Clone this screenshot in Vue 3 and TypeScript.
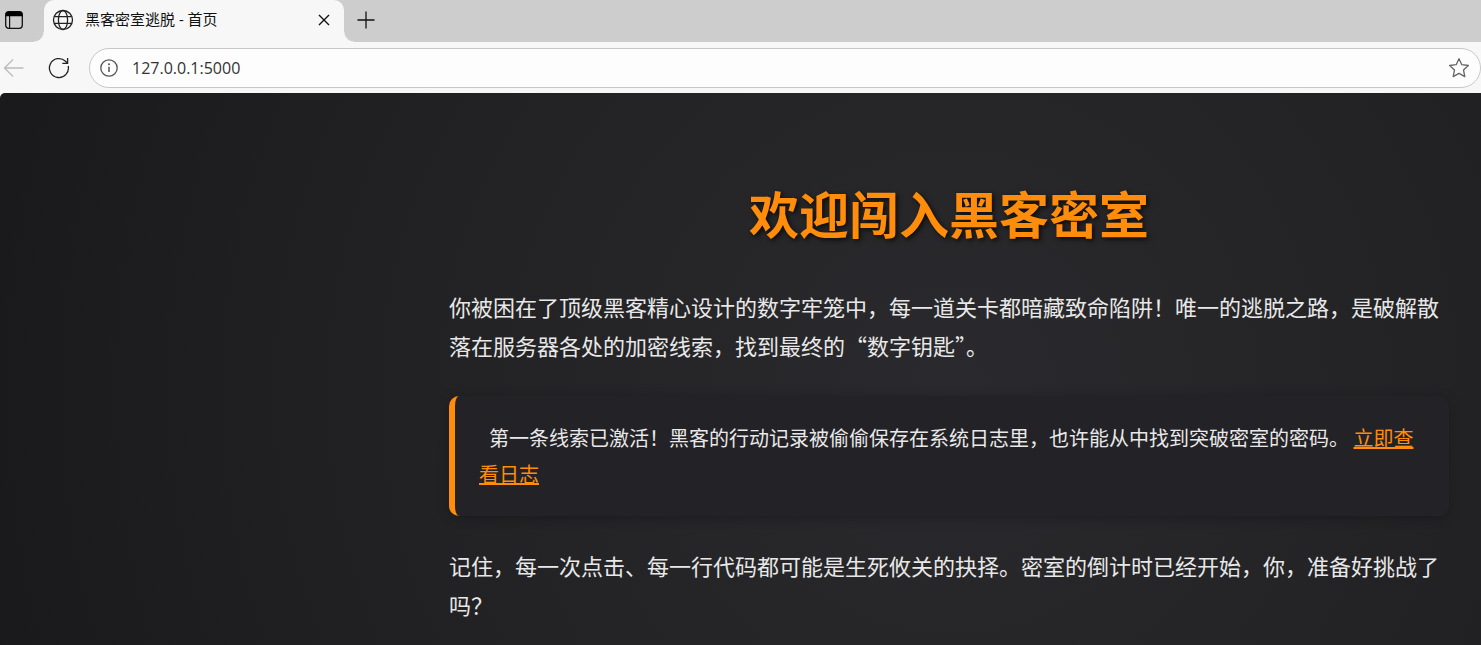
<script setup lang="ts">
import { ref } from 'vue'

const tabTitle = '黑客密室逃脱 - 首页'
const address = ref('127.0.0.1:5000')
</script>

<template>
  <div class="browser" lang="zh-CN">
    <header class="tab-strip">
      <button class="icon-button tab-menu" type="button" aria-label="标签页操作菜单">
        <svg width="20" height="20" viewBox="0 0 20 20" fill="none" stroke="#111">
          <rect x="1.7" y="1.7" width="16.6" height="16.6" rx="3" stroke-width="1.3" />
          <path d="M1.5 6.2V4.5a3 3 0 0 1 3-3h11a3 3 0 0 1 3 3v1.7z" fill="#000" stroke="none" />
          <path d="M5.6 6v12" stroke-width="1.2" />
        </svg>
      </button>
      <div class="tab">
        <svg class="globe" width="22" height="22" viewBox="0 0 22 22" fill="none" stroke="#222" stroke-width="1.3">
          <circle cx="11" cy="11" r="9.5" />
          <ellipse cx="11" cy="11" rx="4.6" ry="9.5" />
          <path d="M2.3 7.6h17.4M2.3 14.4h17.4" />
        </svg>
        <span class="tab-title">{{ tabTitle }}</span>
        <button class="icon-button" type="button" aria-label="关闭标签页">
          <svg width="12" height="12" viewBox="0 0 12 12" fill="none" stroke="#111" stroke-width="1.4">
            <path d="M1 1l10 10M11 1L1 11" />
          </svg>
        </button>
      </div>
      <button class="icon-button new-tab" type="button" aria-label="新建标签页">
        <svg width="18" height="18" viewBox="0 0 18 18" fill="none" stroke="#111" stroke-width="1.3">
          <path d="M9 .5v17M.5 9h17" />
        </svg>
      </button>
    </header>

    <nav class="toolbar">
      <button class="icon-button back" type="button" aria-label="后退" disabled>
        <svg width="24" height="20" viewBox="0 0 24 20" fill="none" stroke="#bcbcbc" stroke-width="1.3">
          <path d="M23.5 10H4.5M13 1.5L4.5 10l8.5 8.5" />
        </svg>
      </button>
      <button class="icon-button reload" type="button" aria-label="刷新">
        <svg width="22" height="22" viewBox="0 0 22 22" fill="none" stroke="#222" stroke-width="1.3">
          <path d="M20.2 9A9.5 9.5 0 1 1 17.500 4.200L19.500 6.200" />
          <path d="M19.600 1v5.300h-5.300" />
        </svg>
      </button>
      <div class="address-bar">
        <button class="icon-button" type="button" aria-label="查看站点信息">
          <svg width="18" height="18" viewBox="0 0 18 18" fill="none" stroke="#555" stroke-width="1.3">
            <circle cx="9" cy="9" r="8.2" />
            <path d="M9 7.8v5.2" stroke-width="1.5" />
            <circle cx="9" cy="5.3" r="1" fill="#555" stroke="none" />
          </svg>
        </button>
        <input v-model="address" class="address" type="text" aria-label="地址栏" spellcheck="false" />
        <button class="icon-button" type="button" aria-label="收藏此页面">
          <svg width="22" height="22" viewBox="0 0 22 22" fill="none" stroke="#666" stroke-width="1.3" stroke-linejoin="round">
            <path d="M11 1.7l2.8 6 6.6.8-4.900 4.500 1.300 6.600-5.800-3.200-5.800 3.200 1.300-6.600-4.900-4.500 6.600-.8z" />
          </svg>
        </button>
      </div>
    </nav>

    <main class="page">
      <article class="content">
        <h1>欢迎闯入黑客密室</h1>
        <p>你被困在了顶级黑客精心设计的数字牢笼中，每一道关卡都暗藏致命陷阱！唯一的逃脱之路，是破解散落在服务器各处的加密线索，找到最终的“数字钥匙”。</p>
        <section class="clue">
          第一条线索已激活！黑客的行动记录被偷偷保存在系统日志里，也许能从中找到突破密室的密码。
          <a href="#logs">立即查看日志</a>
        </section>
        <p>记住，每一次点击、每一行代码都可能是生死攸关的抉择。密室的倒计时已经开始，你，准备好挑战了吗？</p>
      </article>
    </main>
  </div>
</template>

<style>
body {
  margin: 0;
  background: #f7f7f7;
}
</style>

<style scoped>
.browser {
  display: flex;
  flex-direction: column;
  min-height: 100vh;
  background: #f7f7f7;
  font-family: "Noto Sans CJK SC", sans-serif;
}

.icon-button {
  display: flex;
  flex: none;
  align-items: center;
  justify-content: center;
  padding: 0;
  border: 0;
  background: none;
}

.icon-button svg {
  display: block;
}

.tab-strip {
  display: flex;
  height: 42px;
  background: #cdcdcd;
}

.tab-menu {
  width: 44px;
  padding: 0 16px 2px 0;
  box-sizing: border-box;
}

.tab {
  position: relative;
  display: flex;
  align-items: center;
  box-sizing: border-box;
  width: 300px;
  padding: 0 14px 2px 8px;
  border-radius: 10px 10px 0 0;
  background: #f7f7f7;
}

.tab::before,
.tab::after {
  content: "";
  position: absolute;
  bottom: 0;
  width: 10px;
  height: 10px;
}

.tab::before {
  right: 100%;
  background: radial-gradient(circle at 0 0, #cdcdcd 9px, #f7f7f7 10px);
}

.tab::after {
  left: 100%;
  background: radial-gradient(circle at 100% 0, #cdcdcd 9px, #f7f7f7 10px);
}

.tab-title {
  flex: 1;
  margin-left: 11px;
  padding-bottom: 2px;
  color: #111;
  font-family: "Open Sans", "Noto Sans CJK SC", sans-serif;
  font-size: 15px;
  line-height: 20px;
  white-space: nowrap;
}

.new-tab {
  width: 44px;
  padding-bottom: 2px;
}

.toolbar {
  display: flex;
  align-items: center;
  height: 51px;
}

.back {
  width: 24px;
}

.reload {
  width: 22px;
  margin: 0 19px 0 24px;
}

.address-bar {
  display: flex;
  flex: 1;
  align-items: center;
  box-sizing: border-box;
  height: 40px;
  padding: 0 10px;
  border: 1px solid #c8c8c8;
  border-radius: 20px;
  background: #fdfdfd;
}

.address {
  flex: 1;
  min-width: 0;
  margin: 0 14px;
  padding: 0;
  border: 0;
  outline: 0;
  background: none;
  color: #333;
  font-family: "Open Sans", sans-serif;
  font-size: 16px;
  line-height: 24px;
}

.page {
  flex: 1;
  box-sizing: border-box;
  padding: 89px 32px 18px;
  border-radius: 5px 0 0 0;
  background: radial-gradient(circle 1070px at calc(100% - 532px) 300px, #2a2a2e, #222224 50%, #18181a);
  color: #e8e8e8;
}

.content {
  max-width: 1000px;
  margin-left: auto;
}

h1 {
  margin: 0 0 45px;
  color: #ff8c0a;
  font-size: 50px;
  font-weight: 700;
  line-height: 60px;
  text-align: center;
  text-shadow: 2px 2px 5px rgba(0, 0, 0, 0.7);
}

p {
  margin: 0;
  font-size: 22px;
  line-height: 39px;
}

.clue {
  margin: 31px 0 30px;
  padding: 24px;
  border-left: 6px solid #ff8c0a;
  border-radius: 10px;
  background: #232226;
  box-shadow: 0 2px 12px rgba(0, 0, 0, 0.25);
  font-size: 20px;
  line-height: 36px;
  text-indent: 10px;
}

.clue a {
  color: #ff8c0a;
}
</style>
